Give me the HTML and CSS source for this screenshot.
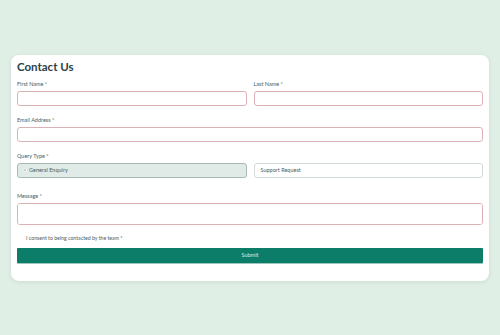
FILE: index.html
```html
<!DOCTYPE html>
<html lang="en">

<head>
    <meta charset="UTF-8">
    <meta name="viewport" content="width=device-width, initial-scale=1.0">
    <title>Contact Us</title>
    <link rel="stylesheet" href="styles.css">
</head>

<body>
    <main class="card">
        <h1>Contact Us</h1>

        <form class="form">
            <div class="row">
                <div class="field">
                    <label class="label" for="first">First Name *</label>
                    <input class="input" type="text" id="first">
                </div>
                <div class="field">
                    <label class="label" for="last">Last Name *</label>
                    <input class="input" type="text" id="last">
                </div>
            </div>

            <div class="field">
                <label class="label" for="email">Email Address *</label>
                <input class="input" type="email" id="email">
            </div>

            <div class="field">
                <span class="label">Query Type *</span>
                <div class="row">
                    <label class="option selected"><span class="dot"></span>General Enquiry</label>
                    <label class="option"><span class="dot"></span>Support Request</label>
                </div>
            </div>

            <div class="field message-field">
                <label class="label" for="message">Message *</label>
                <textarea class="input message" id="message"></textarea>
            </div>

            <label class="consent">I consent to being contacted by the team *</label>

            <button class="submit" type="button">Submit</button>
        </form>
    </main>
</body>

</html>
```

FILE: styles.css
```css
body {
    margin: 0;
    height: 335px;
    display: flex;
    align-items: center;
    justify-content: center;
    background-color: #e0efe6;
    font-family: Lato, 'Open Sans', sans-serif;
    color: #2b4244;
}

.card {
    width: 466px;
    padding: 4px 6px 18px;
    background-color: white;
    border-radius: 8px;
    box-shadow: 0 1px 4px rgba(60, 90, 80, 0.12);
}

h1 {
    margin: 0;
    font-size: 11.5px;
    line-height: 16px;
    font-weight: 700;
    color: #2b4244;
}

.form {
    display: flex;
    flex-direction: column;
    gap: 12px;
    margin-top: 7px;
}

.row {
    display: flex;
    gap: 7px;
}

.row > * {
    flex: 1;
}

.field {
    display: flex;
    flex-direction: column;
    gap: 5px;
}

.message-field {
    margin-top: 4px;
}

.label {
    font-size: 5.5px;
    line-height: 4px;
    color: #4a5e5e;
}

.input {
    box-sizing: border-box;
    height: 15px;
    margin: 0;
    border: 1px solid #dcb2b6;
    border-radius: 3px;
    background: white;
    font: inherit;
}

.message {
    height: 22px;
    resize: none;
}

.option {
    box-sizing: border-box;
    height: 15px;
    display: flex;
    align-items: center;
    gap: 3px;
    padding-left: 6px;
    border: 1px solid #d2dbd9;
    border-radius: 3px;
    font-size: 5.5px;
    color: #4a5e5e;
}

.option.selected {
    background-color: #e0ebe8;
    border-color: #a6b9b4;
}

.dot {
    display: none;
    width: 2px;
    height: 2px;
    border-radius: 50%;
}

.selected .dot {
    display: block;
    background-color: #b7c6c2;
    box-shadow: 0 0 0 0.5px #ffffff;
}

.consent {
    margin-top: -1px;
    padding-left: 9px;
    font-size: 5.2px;
    line-height: 4px;
    color: #4a5e5e;
}

.submit {
    height: 15px;
    margin-top: -4px;
    border: none;
    border-radius: 1px;
    background-color: #0c7d69;
    color: #d9efe9;
    font-family: inherit;
    font-size: 5.5px;
    box-shadow: 0 1px 0 #9cc5bb;
}
```
